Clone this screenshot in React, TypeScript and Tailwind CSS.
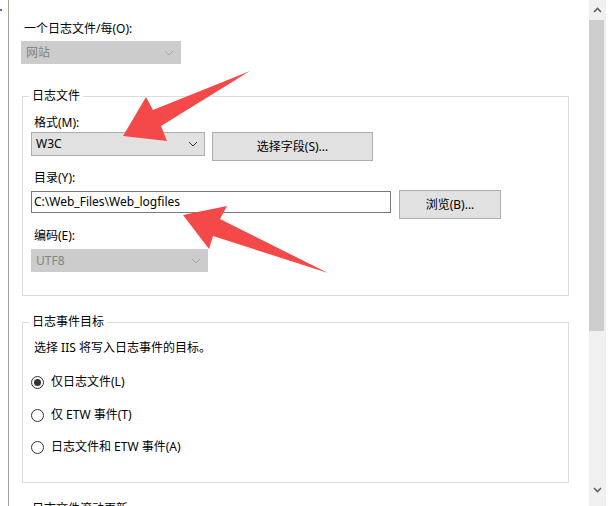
import React from "react";

const font = "font-['Noto_Sans','Noto_Sans_CJK_SC',sans-serif] text-[12px] leading-[16px]";

function Chevron({ color }: { color: string }) {
  return (
    <svg width="10" height="6" viewBox="0 0 10 6" className="shrink-0">
      <polyline points="1,1 5,5 9,1" fill="none" stroke={color} strokeWidth="1" />
    </svg>
  );
}

function Select({
  value,
  width,
  disabled,
}: {
  value: string;
  width: string;
  disabled?: boolean;
}) {
  return (
    <div
      className={
        disabled
          ? `${width} h-[23px] flex items-center justify-between pl-[4px] pr-[6px] bg-[#cccccc] border border-[#cccccc] text-[#838383]`
          : `${width} h-[24px] flex items-center justify-between pl-[4px] pr-[6px] bg-[#e1e1e1] border border-[#adadad] text-black`
      }
    >
      <span>{value}</span>
      <Chevron color={disabled ? "#a8a8a8" : "#333333"} />
    </div>
  );
}

function Button({ label, width }: { label: string; width: string }) {
  return (
    <div
      className={`${width} h-[29px] flex items-center justify-center bg-[#e1e1e1] border border-[#adadad] text-black`}
    >
      {label}
    </div>
  );
}

function Radio({ label, checked }: { label: string; checked?: boolean }) {
  return (
    <div className="flex items-center h-[16px]">
      <div className="w-[13px] h-[13px] rounded-full border border-[#333333] flex items-center justify-center">
        {checked && <div className="w-[7px] h-[7px] rounded-full bg-[#333333]" />}
      </div>
      <span className="ml-[7px]">{label}</span>
    </div>
  );
}

function Group({
  title,
  className,
  children,
}: {
  title: string;
  className: string;
  children?: React.ReactNode;
}) {
  return (
    <div className={`relative shrink-0 w-[547px] border border-[#dcdcdc] pl-[8px] ${className}`}>
      <span className="absolute -top-[9px] left-[6px] bg-white px-[3px] text-black">{title}</span>
      {children}
    </div>
  );
}

function Arrows() {
  return (
    <svg
      className="absolute inset-0 pointer-events-none"
      width="613"
      height="506"
      viewBox="0 0 613 506"
    >
      <polygon
        points="123,136 146,97 153,110 250,71 161,126 167,141"
        fill="#f54848"
      />
      <polygon
        points="183,215 227,206 220,219 328,273 213,236 209,249"
        fill="#f54848"
      />
    </svg>
  );
}

export default function App() {
  return (
    <div className={`relative flex w-[613px] h-[506px] overflow-hidden bg-white text-black ${font}`}>
      {/* left frame edge */}
      <div className="w-[9px] h-full shrink-0 border-r border-[#a0a0a0] flex flex-col">
        <div className="mt-[9px] w-[2px] h-[2px] bg-[#3c78d8]" />
      </div>

      {/* panel */}
      <div className="w-[580px] shrink-0 pl-[12px] flex flex-col">
        <div className="shrink-0 mt-[21px] pl-[3px]">一个日志文件/每(O):</div>
        <div className="shrink-0 mt-[4px]">
          <Select value="网站" width="w-[160px]" disabled />
        </div>

        <Group title="日志文件" className="mt-[32px] ml-[1px] h-[200px]">
          <div className="mt-[18px] pl-[3px]">格式(M):</div>
          <div className="mt-[1px] flex items-start gap-[7px]">
            <Select value="W3C" width="w-[174px]" />
            <Button label="选择字段(S)..." width="w-[161px]" />
          </div>
          <div className="mt-[9px] pl-[3px]">目录(Y):</div>
          <div className="mt-[4px] flex items-start gap-[8px]">
            <div className="mt-[1px] w-[360px] h-[22px] border border-[#7a7a7a] flex items-center pl-[2px]">
              C:\Web_Files\Web_logfiles
            </div>
            <Button label="浏览(B)..." width="w-[102px]" />
          </div>
          <div className="mt-[9px] pl-[3px]">编码(E):</div>
          <div className="mt-[5px]">
            <Select value="UTF8" width="w-[177px]" disabled />
          </div>
        </Group>

        <Group title="日志事件目标" className="mt-[26px] ml-[1px] h-[161px]">
          <div className="mt-[17px] pl-[3px]">选择 IIS 将写入日志事件的目标。</div>
          <div className="mt-[18px]">
            <Radio label="仅日志文件(L)" checked />
          </div>
          <div className="mt-[17px]">
            <Radio label="仅 ETW 事件(T)" />
          </div>
          <div className="mt-[16px]">
            <Radio label="日志文件和 ETW 事件(A)" />
          </div>
        </Group>

        <Group title="日志文件滚动更新" className="mt-[26px] ml-[1px] h-[60px]" />
      </div>

      {/* scrollbar */}
      <div className="w-[17px] h-full shrink-0 bg-[#f0f0f0] flex flex-col items-center">
        <div className="h-[20px] w-full flex items-center justify-center">
          <svg width="9" height="6" viewBox="0 0 9 6">
            <polyline points="1,5 4.5,1.5 8,5" fill="none" stroke="#606060" strokeWidth="1.6" />
          </svg>
        </div>
        <div className="w-[15px] h-[311px] bg-[#cdcdcd] self-start" />
        <div className="flex-1" />
        <div className="h-[26px] w-full flex items-start justify-center pt-[7px]">
          <svg width="9" height="6" viewBox="0 0 9 6">
            <polyline points="1,1 4.5,4.5 8,1" fill="none" stroke="#606060" strokeWidth="1.6" />
          </svg>
        </div>
      </div>

      <Arrows />
    </div>
  );
}
